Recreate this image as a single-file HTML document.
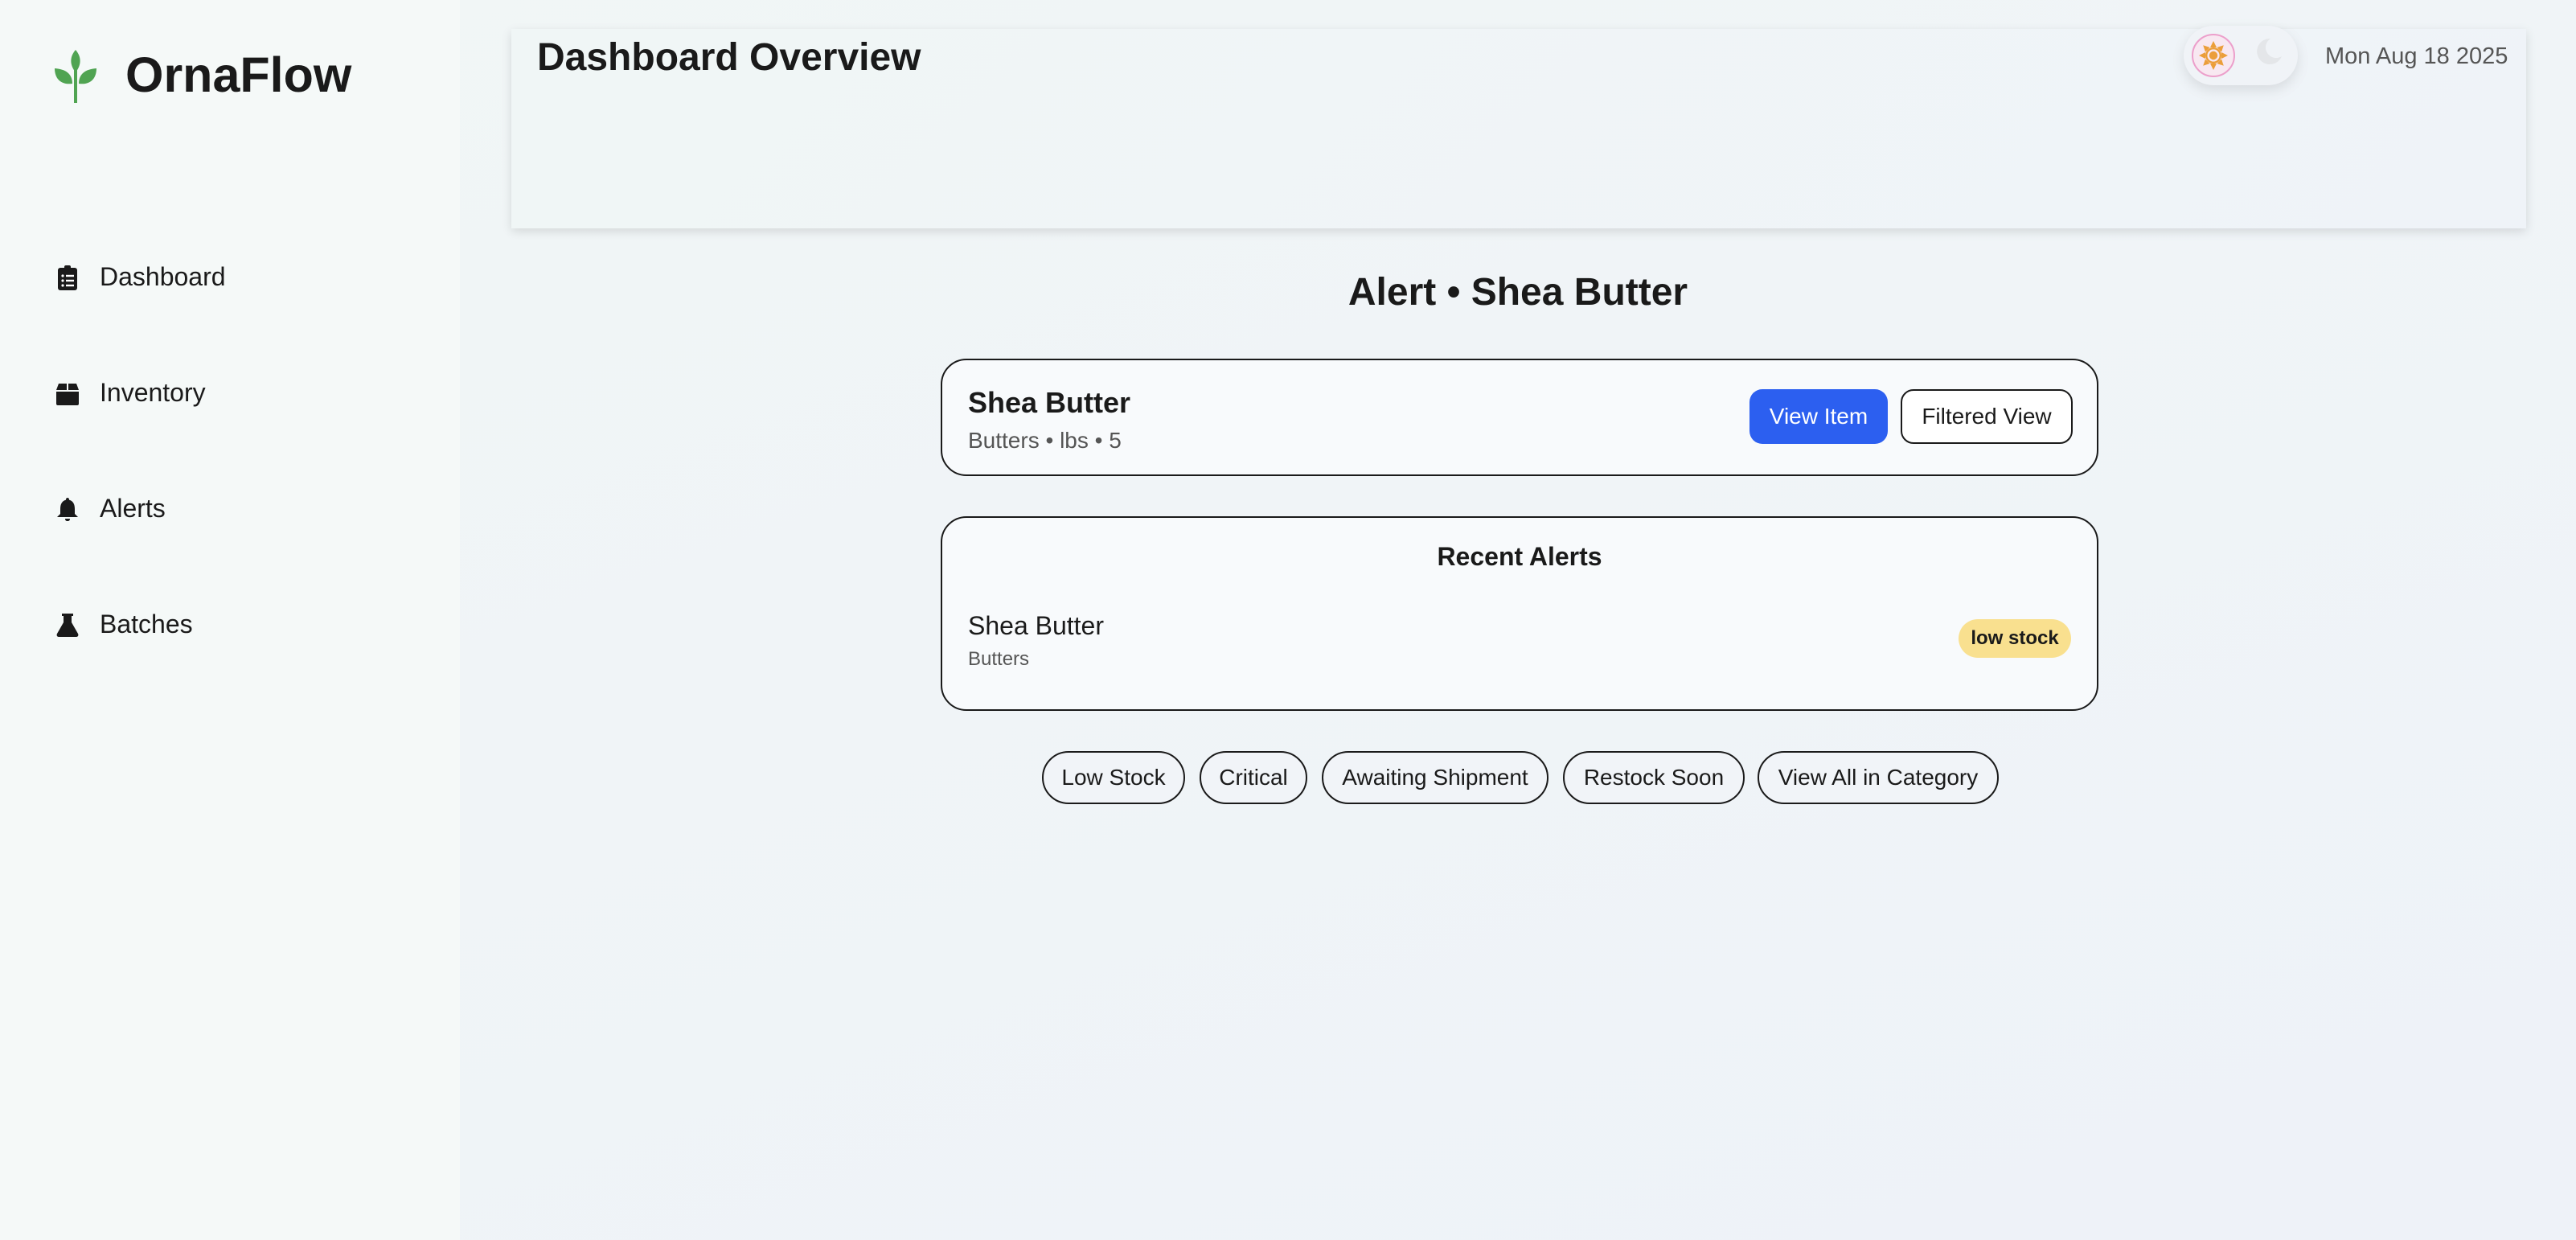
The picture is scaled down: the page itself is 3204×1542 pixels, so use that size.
<!DOCTYPE html>
<html><head><meta charset="utf-8">
<style>
html{zoom:2}
*{box-sizing:border-box;margin:0;padding:0}
body{width:1602px;height:771px;overflow:hidden;font-family:"Liberation Sans",sans-serif;color:#1a1a1a;background:linear-gradient(160deg,#f1f6f6 0%,#eef2f8 100%);position:relative}
.side{position:absolute;left:0;top:0;width:286px;height:771px;background:#f5f9f8}
.logo{position:absolute;left:34px;top:31px}
.brand{position:absolute;left:78px;top:29px;font-size:30.5px;font-weight:bold}
.nav{position:absolute;left:34px;display:flex;align-items:center;font-size:16px}
.nav svg{width:16px;height:16px;margin-right:12px}
.hdr{position:absolute;left:318px;top:18px;width:1253px;height:124px;background:linear-gradient(135deg,#f0f6f6,#eff3f8);box-shadow:0 2px 6px rgba(0,0,0,.12)}
.hdr h1{position:absolute;left:16px;top:4px;font-size:24px}
.tog{position:absolute;left:1358px;top:16px;width:71px;height:37px;border-radius:19px;background:#f0f3f7;box-shadow:0 3px 8px rgba(0,0,0,.1)}
.sun{position:absolute;left:5px;top:5px;width:27px;height:27px;border-radius:50%;background:#f8e8f1;border:1px solid #ec9fcb;display:flex;align-items:center;justify-content:center}
.date{position:absolute;left:1446px;top:27px;font-size:14.5px;color:#555}
.title{position:absolute;left:0;width:100%;padding-left:286px;text-align:center;top:168px;font-size:24px;font-weight:bold}
.card{position:absolute;left:585px;width:720px;border:1.3px solid #1a1a1a;border-radius:16px;background:#f8fafc}
.btn{position:absolute;top:18px;height:34px;border-radius:8px;font-size:14px;display:flex;align-items:center;justify-content:center}
.chip{position:absolute;top:467px;height:33px;border:1.3px solid #1a1a1a;border-radius:17px;font-size:14px;display:flex;align-items:center;justify-content:center;background:#f1f4f8}
</style></head><body>
<div class="side">
<svg class="logo" width="26" height="33" viewBox="0 0 26 33"><path d="M13 0C9.5 4 9 9 13 14C17 9 16.5 4 13 0Z" fill="#50a452"/><path d="M0 11.5C0 18 4 22 11 21C11 15 7 12 0 11.5Z" fill="#50a452"/><path d="M26 11.5C26 18 22 22 15 21C15 15 19 12 26 11.5Z" fill="#50a452"/><rect x="12" y="10" width="2" height="23" fill="#50a452"/></svg>
<div class="brand">OrnaFlow</div>
<div class="nav" style="top:163px"><svg viewBox="0 0 16 16"><rect x="2" y="2" width="12" height="14" rx="1.5" fill="#1a1a1a"/><rect x="6" y="0.5" width="4" height="3" rx="1" fill="#1a1a1a"/><g fill="#fff"><circle cx="5" cy="7" r=".8"/><circle cx="5" cy="10" r=".8"/><circle cx="5" cy="13" r=".8"/><rect x="7" y="6.4" width="5" height="1.2"/><rect x="7" y="9.4" width="5" height="1.2"/><rect x="7" y="12.4" width="5" height="1.2"/></g></svg>Dashboard</div>
<div class="nav" style="top:235px"><svg viewBox="0 0 16 16"><path d="M1 6L2.5 2H7.5V6ZM8.5 2H13.5L15 6H8.5ZM1 7H15V14.5A1 1 0 0 1 14 15.5H2A1 1 0 0 1 1 14.5Z" fill="#1a1a1a"/></svg>Inventory</div>
<div class="nav" style="top:307px"><svg viewBox="0 0 16 16"><path d="M8 1C9 1 9 2 9 2.3C11.5 3 12.5 5 12.5 8V11L14.5 13H1.5L3.5 11V8C3.5 5 4.5 3 7 2.3C7 2 7 1 8 1ZM6.5 14H9.5C9.5 15 9 15.5 8 15.5S6.5 15 6.5 14Z" fill="#1a1a1a"/></svg>Alerts</div>
<div class="nav" style="top:379px"><svg viewBox="0 0 16 16"><path d="M4.5 1H11.5V2.5H10.5V6.5L14.5 13.5C15 14.5 14.5 15.5 13.5 15.5H2.5C1.5 15.5 1 14.5 1.5 13.5L5.5 6.5V2.5H4.5Z" fill="#1a1a1a"/></svg>Batches</div>
</div>
<div class="hdr"><h1>Dashboard Overview</h1></div>
<div class="tog"><div class="sun"><svg width="18" height="18" viewBox="0 0 18 18"><g fill="#eb9e3a"><polygon points="9,0 11,4 7,4"/><polygon points="9,18 11,14 7,14"/><polygon points="0,9 4,7 4,11"/><polygon points="18,9 14,7 14,11"/><polygon points="2.6,2.6 6.8,4 4,6.8"/><polygon points="15.4,15.4 11.2,14 14,11.2"/><polygon points="15.4,2.6 14,6.8 11.2,4"/><polygon points="2.6,15.4 4,11.2 6.8,14"/><circle cx="9" cy="9" r="5"/></g><circle cx="9" cy="9" r="3.2" fill="none" stroke="#f8e8f1" stroke-width="1.2"/></svg></div>
<svg style="position:absolute;left:44px;top:7px" width="18" height="18" viewBox="0 0 18 18"><path d="M10 1A8 8 0 1 0 17 12A6.5 6.5 0 0 1 10 1Z" fill="#e4e6e9"/></svg></div>
<div class="date">Mon Aug 18 2025</div>
<div class="title">Alert • Shea Butter</div>
<div class="card" style="top:223px;height:73px">
<div style="position:absolute;left:16px;top:16px;font-size:18px;font-weight:bold">Shea Butter</div>
<div style="position:absolute;left:16px;top:42px;font-size:14px;color:#555">Butters • lbs • 5</div>
<div class="btn" style="left:502px;width:86px;background:#2c5ff0;color:#fff">View Item</div>
<div class="btn" style="left:596px;width:107px;border:1.3px solid #1a1a1a;background:#fff">Filtered View</div>
</div>
<div class="card" style="top:321px;height:121px">
<div style="position:absolute;left:0;width:100%;top:15px;text-align:center;font-size:16px;font-weight:bold">Recent Alerts</div>
<div style="position:absolute;left:16px;top:58px;font-size:16px">Shea Butter</div>
<div style="position:absolute;left:16px;top:81px;font-size:12px;color:#555">Butters</div>
<div style="position:absolute;left:632px;top:63px;width:70px;height:24px;border-radius:12px;background:#f9e08f;font-size:12px;font-weight:bold;display:flex;align-items:center;justify-content:center">low stock</div>
</div>
<div class="chip" style="left:648px;width:89px">Low Stock</div>
<div class="chip" style="left:746px;width:67px">Critical</div>
<div class="chip" style="left:822px;width:141px">Awaiting Shipment</div>
<div class="chip" style="left:972px;width:113px">Restock Soon</div>
<div class="chip" style="left:1093px;width:150px">View All in Category</div>
</body></html>
